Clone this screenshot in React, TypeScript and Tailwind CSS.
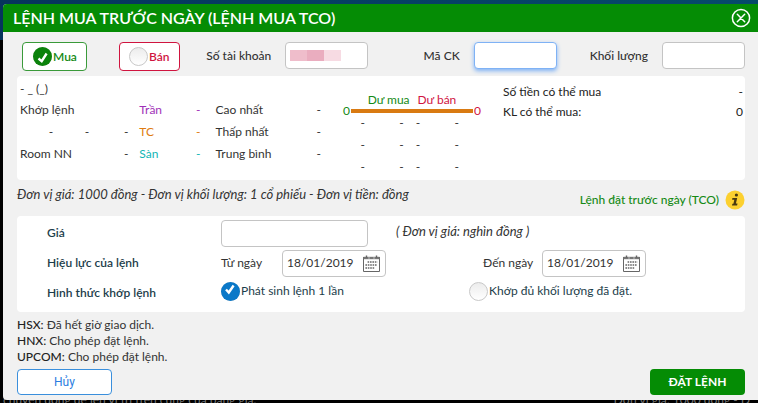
import React, { useState } from 'react';

type Side = 'buy' | 'sell';
type MatchType = 'once' | 'full';

const inputClass =
    'h-[27px] rounded border border-[#c4c4c4] bg-white px-1.5 text-xs text-[#333] focus:outline-none focus:border-[#7fb2f5]';

const notices = [
    { board: 'HSX:', text: 'Đã hết giờ giao dịch.' },
    { board: 'HNX:', text: 'Cho phép đặt lệnh.' },
    { board: 'UPCOM:', text: 'Cho phép đặt lệnh.' },
];

const CloseIcon: React.FC = () => (
    <svg viewBox="0 0 20 20" className="h-5 w-5" fill="none" stroke="white" strokeWidth="1.5" strokeLinecap="round">
        <circle cx="10" cy="10" r="8.6" />
        <path d="M6.3 6.3l7.4 7.4M13.7 6.3l-7.4 7.4" />
    </svg>
);

const CalendarIcon: React.FC = () => (
    <svg viewBox="0 0 17 17" className="h-[17px] w-[17px] shrink-0" fill="none" stroke="#666">
        <path d="M0.5 2v14.5h16V2" />
        <path d="M0.5 3h16" strokeWidth="2.4" stroke="#777" />
        <path d="M3.5 0.5v2.5M13.5 0.5v2.5" strokeWidth="1.4" />
        <path d="M5.5 3h1M10.5 3h1" strokeWidth="1.2" stroke="white" />
        <path d="M4.6 7h9.8M2.4 10h12M2.4 13h9" strokeWidth="1.5" strokeDasharray="1.6 0.8" />
    </svg>
);

const InfoIcon: React.FC = () => (
    <svg viewBox="0 0 20 20" className="h-5 w-5">
        <circle cx="10" cy="10" r="9.5" fill="#fcd02f" />
        <circle cx="11.4" cy="5" r="1.6" fill="#4a3a10" />
        <path d="M7.4 8h4.8l-1.3 5.6h1.6l-0.4 1.8H7l0.4-1.6h1l0.9-4.1H7.1z" fill="#4a3a10" />
    </svg>
);

interface RadioProps {
    name: string;
    label: string;
    checked: boolean;
    onChange: () => void;
    fill?: string;
    className?: string;
}

const Radio: React.FC<RadioProps> = ({ name, label, checked, onChange, fill = '#0a78c8', className = '' }) => (
    <label className={`flex cursor-pointer items-center gap-px whitespace-nowrap ${className}`}>
        <span className="relative h-[19px] w-[19px] shrink-0">
            <input
                type="radio"
                name={name}
                checked={checked}
                onChange={onChange}
                className="block h-[19px] w-[19px] appearance-none rounded-full border border-[#c8c8c8] bg-linear-to-b from-[#ececec] to-white"
            />
            {checked && (
                <svg viewBox="0 0 19 19" className="pointer-events-none absolute inset-0 h-full w-full">
                    <circle cx="9.5" cy="9.5" r="9.5" fill={fill} />
                    <path
                        d={fill === '#0a78c8' ? 'M5 7.5l2.8 3L12.6 3.5' : 'M5.5 11.5l3.2 2.6L13.6 6.5'}
                        fill="none"
                        stroke="white"
                        strokeWidth="2.4"
                    />
                </svg>
            )}
        </span>
        {label}
    </label>
);

const DateField: React.FC<{ id: string; value: string; onChange: (v: string) => void }> = ({ id, value, onChange }) => (
    <div className="flex h-[27px] w-[104px] items-center rounded border border-[#c4c4c4] bg-white pr-[5px] pl-1">
        <input
            id={id}
            type="text"
            value={value}
            onChange={(e) => onChange(e.target.value)}
            className="w-full min-w-0 bg-transparent text-xs text-[#333] focus:outline-none"
        />
        <CalendarIcon />
    </div>
);

const QuoteTable: React.FC = () => (
    <table className="w-full table-fixed text-right leading-[22px]">
        <colgroup>
            <col className="w-[11%]" />
            <col className="w-[12%]" />
            <col className="w-[13%]" />
            <col className="w-[20%]" />
            <col className="w-[4%]" />
            <col className="w-[32%]" />
            <col className="w-[8%]" />
        </colgroup>
        <tbody>
            <tr>
                <td colSpan={3} className="text-left">Khớp lệnh</td>
                <td className="pl-[11px] text-left text-[#a030b8]">Trần</td>
                <td className="text-[#a030b8]">-</td>
                <td className="pl-[15px] text-left">Cao nhất</td>
                <td>-</td>
            </tr>
            <tr>
                <td>-</td>
                <td>-</td>
                <td>-</td>
                <td className="pl-[11px] text-left text-[#e07b10]">TC</td>
                <td className="text-[#e07b10]">-</td>
                <td className="pl-[15px] text-left">Thấp nhất</td>
                <td>-</td>
            </tr>
            <tr>
                <td colSpan={2} className="text-left">Room NN</td>
                <td>-</td>
                <td className="pl-[11px] text-left text-[#10b5b5]">Sàn</td>
                <td className="text-[#10b5b5]">-</td>
                <td className="pl-[15px] text-left">Trung bình</td>
                <td>-</td>
            </tr>
        </tbody>
    </table>
);

const DepthTable: React.FC = () => (
    <div className="pt-4">
        <div className="flex justify-center gap-2 leading-4">
            <span className="text-[#158a15]">Dư mua</span>
            <span className="text-[#d0143f]">Dư bán</span>
        </div>
        <div className="flex items-center gap-px leading-[6px]">
            <span className="text-[#158a15]">0</span>
            <div className="h-1 flex-1 bg-[#d97a12]" />
            <span className="text-[#d0143f]">0</span>
        </div>
        <table className="-mt-0.5 w-full table-fixed text-right leading-[22px]">
            <colgroup>
                <col className="w-[16%]" />
                <col className="w-[28%]" />
                <col className="w-[12%]" />
                <col className="w-[28%]" />
                <col className="w-[16%]" />
            </colgroup>
            <tbody>
                {[0, 1, 2].map((row) => (
                    <tr key={row}>
                        <td>-</td>
                        <td>-</td>
                        <td>-</td>
                        <td>-</td>
                        <td />
                    </tr>
                ))}
            </tbody>
        </table>
    </div>
);

const App: React.FC = () => {
    const [side, setSide] = useState<Side>('buy');
    const [matchType, setMatchType] = useState<MatchType>('once');
    const [symbol, setSymbol] = useState('');
    const [quantity, setQuantity] = useState('');
    const [price, setPrice] = useState('');
    const [fromDate, setFromDate] = useState('18/01/2019');
    const [toDate, setToDate] = useState('18/01/2019');

    return (
        <div className="h-screen overflow-hidden bg-black bg-linear-to-r from-[#06345c] to-[#064a6b] bg-[length:100%_40px] bg-no-repeat pt-1 pl-[3px] font-['Lato','Noto_Sans',sans-serif] text-xs text-[#333]">
            <div className="relative z-10 rounded-l bg-[#f1f1f1]">
                <header className="flex h-7 items-center justify-between rounded-tl bg-[#058c05] pr-[7px] pl-2.5">
                    <h1 className="text-base font-semibold whitespace-nowrap text-white">
                        LỆNH MUA TRƯỚC NGÀY (LỆNH MUA TCO)
                    </h1>
                    <button type="button" aria-label="Đóng">
                        <CloseIcon />
                    </button>
                </header>

                <form className="pr-[13px] pb-[5px] pl-3.5" onSubmit={(e) => e.preventDefault()}>
                    <div className="flex items-start pt-2.5 pl-[5px]">
                        <Radio
                            name="side"
                            label="Mua"
                            checked={side === 'buy'}
                            onChange={() => setSide('buy')}
                            fill="#0b820b"
                            className="h-[29px] w-[65px] rounded border border-[#3a9a3a] bg-white pl-2.5 font-semibold text-[#158a15]"
                        />
                        <Radio
                            name="side"
                            label="Bán"
                            checked={side === 'sell'}
                            onChange={() => setSide('sell')}
                            fill="#d0143f"
                            className="ml-8 h-[29px] w-[61px] rounded border border-[#d0143f] bg-white pl-[9px] font-semibold text-[#d0143f]"
                        />
                        <div className="flex flex-1 items-center justify-end gap-3.5">
                            <span className="font-medium whitespace-nowrap">Số tài khoản</span>
                            <div className="flex h-[27px] w-[83px] items-center rounded border border-[#c4c4c4] bg-white pl-1">
                                <span className="h-[11px] w-[17px] bg-[#efbdcb]" />
                                <span className="h-[11px] w-[17px] bg-[#eaadbf]" />
                                <span className="h-[11px] w-[17px] bg-[#f7dbe3]" />
                            </div>
                        </div>
                        <div className="flex flex-1 items-center justify-end gap-3.5">
                            <label htmlFor="symbol" className="font-medium whitespace-nowrap">Mã CK</label>
                            <input
                                id="symbol"
                                value={symbol}
                                onChange={(e) => setSymbol(e.target.value)}
                                className="h-[27px] w-[83px] rounded border border-[#7fb2f5] bg-white px-1.5 shadow-[0_2px_4px_#7fb2f5] focus:outline-none"
                            />
                        </div>
                        <div className="flex flex-1 items-center justify-end gap-3.5">
                            <label htmlFor="quantity" className="font-medium whitespace-nowrap">Khối lượng</label>
                            <input
                                id="quantity"
                                value={quantity}
                                onChange={(e) => setQuantity(e.target.value)}
                                className={`${inputClass} w-[83px]`}
                            />
                        </div>
                    </div>

                    <section className="mt-[5px] grid grid-cols-[301fr_138fr_240fr] gap-x-[22px] rounded bg-white pr-0.5 pb-0.5 pl-[3px]">
                        <div className="pt-[3px]">
                            <p className="leading-5">- _ (_)</p>
                            <QuoteTable />
                        </div>
                        <DepthTable />
                        <dl className="grid grid-cols-[1fr_auto] content-start pt-1.5 text-[#222]">
                            <dt className="leading-5">Số tiền có thể mua</dt>
                            <dd className="text-right leading-5">-</dd>
                            <dt className="leading-5">KL có thể mua:</dt>
                            <dd className="text-right leading-5">0</dd>
                        </dl>
                    </section>

                    <div className="flex h-9 justify-between">
                        <p className="pt-1 text-[13px] leading-5 italic">
                            Đơn vị giá: 1000 đồng - Đơn vị khối lượng: 1 cổ phiếu - Đơn vị tiền: đồng
                        </p>
                        <p className="flex items-center gap-1.5 pt-1 font-medium text-[#158a15]">
                            Lệnh đặt trước ngày (TCO)
                            <InfoIcon />
                        </p>
                    </div>

                    <section className="grid grid-cols-[174fr_248fr_276fr] items-center rounded bg-white pt-0.5 pb-1 pl-[30px]">
                        <label htmlFor="price" className="leading-[30px] font-semibold text-[#1c3d4a]">Giá</label>
                        <div className="col-span-2 flex items-center gap-7">
                            <input
                                id="price"
                                value={price}
                                onChange={(e) => setPrice(e.target.value)}
                                className={`${inputClass} w-[147px]`}
                            />
                            <span className="pb-1 text-[13px] leading-5 italic">( Đơn vị giá: nghìn đồng )</span>
                        </div>

                        <span className="leading-[30px] font-semibold text-[#1c3d4a]">Hiệu lực của lệnh</span>
                        <div className="flex items-center">
                            <label htmlFor="from-date" className="w-[61px] whitespace-nowrap">Từ ngày</label>
                            <DateField id="from-date" value={fromDate} onChange={setFromDate} />
                        </div>
                        <div className="flex items-center pl-3.5">
                            <label htmlFor="to-date" className="w-[59px] whitespace-nowrap">Đến ngày</label>
                            <DateField id="to-date" value={toDate} onChange={setToDate} />
                        </div>

                        <span className="leading-[30px] font-semibold text-[#1c3d4a]">Hình thức khớp lệnh</span>
                        <Radio
                            name="match"
                            label="Phát sinh lệnh 1 lần"
                            checked={matchType === 'once'}
                            onChange={() => setMatchType('once')}
                            className="pb-1 text-[#1c3d4a]"
                        />
                        <Radio
                            name="match"
                            label="Khớp đủ khối lượng đã đặt."
                            checked={matchType === 'full'}
                            onChange={() => setMatchType('full')}
                            className="pb-1 text-[#1c3d4a]"
                        />
                    </section>

                    <ul className="pt-[5px] leading-4">
                        {notices.map((n) => (
                            <li key={n.board}>
                                <span className="font-medium text-[#222]">{n.board}</span> {n.text}
                            </li>
                        ))}
                    </ul>

                    <div className="flex justify-between pt-1">
                        <button
                            type="button"
                            className="h-[26px] w-[95px] rounded border border-[#3a8fdc] bg-white font-['Roboto',sans-serif] text-[#2a7de1]"
                        >
                            Hủy
                        </button>
                        <button type="submit" className="h-[26px] w-[95px] rounded bg-[#058c05] font-bold text-white">
                            ĐẶT LỆNH
                        </button>
                    </div>
                </form>
            </div>

            <footer className="-mt-2 flex justify-between pr-2 leading-4 whitespace-nowrap text-[#777]">
                <span>chuyển đồng để lên vị trí trên cùng của bảng giá.</span>
                <span>Đơn vị giá: 1000 đồng - Đ</span>
            </footer>
        </div>
    );
};

export default App;
